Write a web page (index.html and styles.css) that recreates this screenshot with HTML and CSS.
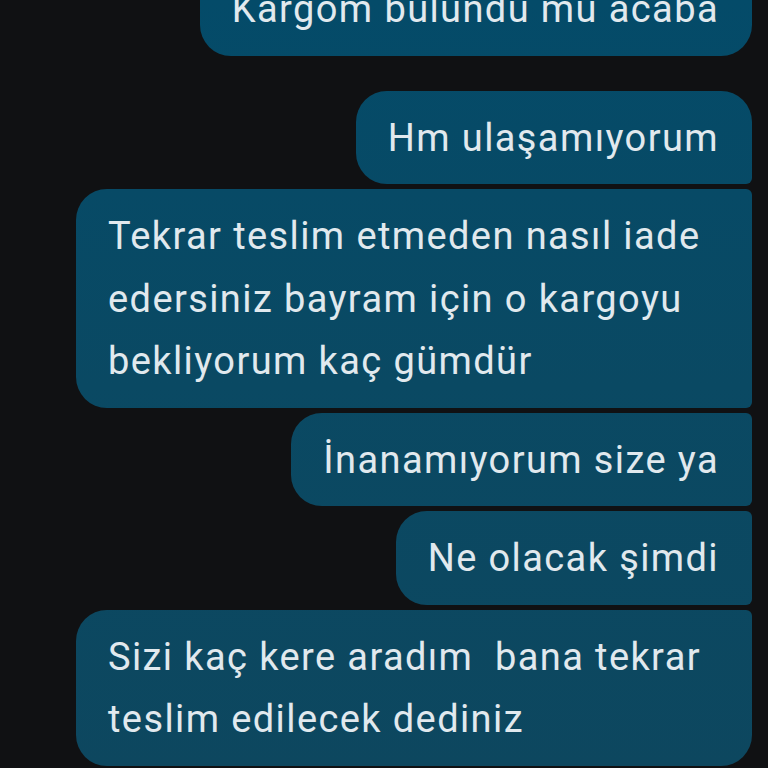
FILE: index.html
```html
<!DOCTYPE html>
<html lang="tr">
<head>
<meta charset="utf-8">
<title>Mesajlar</title>
<link rel="stylesheet" href="styles.css">
</head>
<body>
<div class="thread">
  <div class="group">
    <div class="bubble last">Kargom bulundu mu acaba</div>
  </div>
  <div class="group">
    <div class="bubble first">Hm ulaşamıyorum</div>
    <div class="bubble">Tekrar teslim etmeden nasıl iade edersiniz bayram için o kargoyu bekliyorum kaç gümdür</div>
    <div class="bubble">İnanamıyorum size ya</div>
    <div class="bubble">Ne olacak şimdi</div>
    <div class="bubble last">Sizi kaç kere aradım&nbsp; bana tekrar teslim edilecek dediniz</div>
  </div>
</div>
</body>
</html>
```
FILE: styles.css
```css
html, body {
  margin: 0;
  height: 768px;
  overflow: hidden;
  background: #101113;
}

.thread {
  display: flex;
  flex-direction: column;
  gap: 35px;
  margin-top: -38px;
  padding-right: 16px;
}

.group {
  display: flex;
  flex-direction: column;
  align-items: flex-end;
  gap: 5px;
}

.bubble {
  box-sizing: border-box;
  max-width: 676px;
  padding: 16px 33px 15px 32px;
  font-family: Roboto, "Noto Sans", sans-serif;
  font-size: 38px;
  line-height: 62.5px;
  letter-spacing: 1.4px;
  color: #e1e9ee;
  border-radius: 31px 6px 6px 31px;
  background: linear-gradient(180deg, #044b69 0%, #0a4963 50%, #0d475f 100%) fixed;
}

.bubble.first {
  border-top-right-radius: 31px;
}

.bubble.last {
  border-bottom-right-radius: 31px;
}
```
